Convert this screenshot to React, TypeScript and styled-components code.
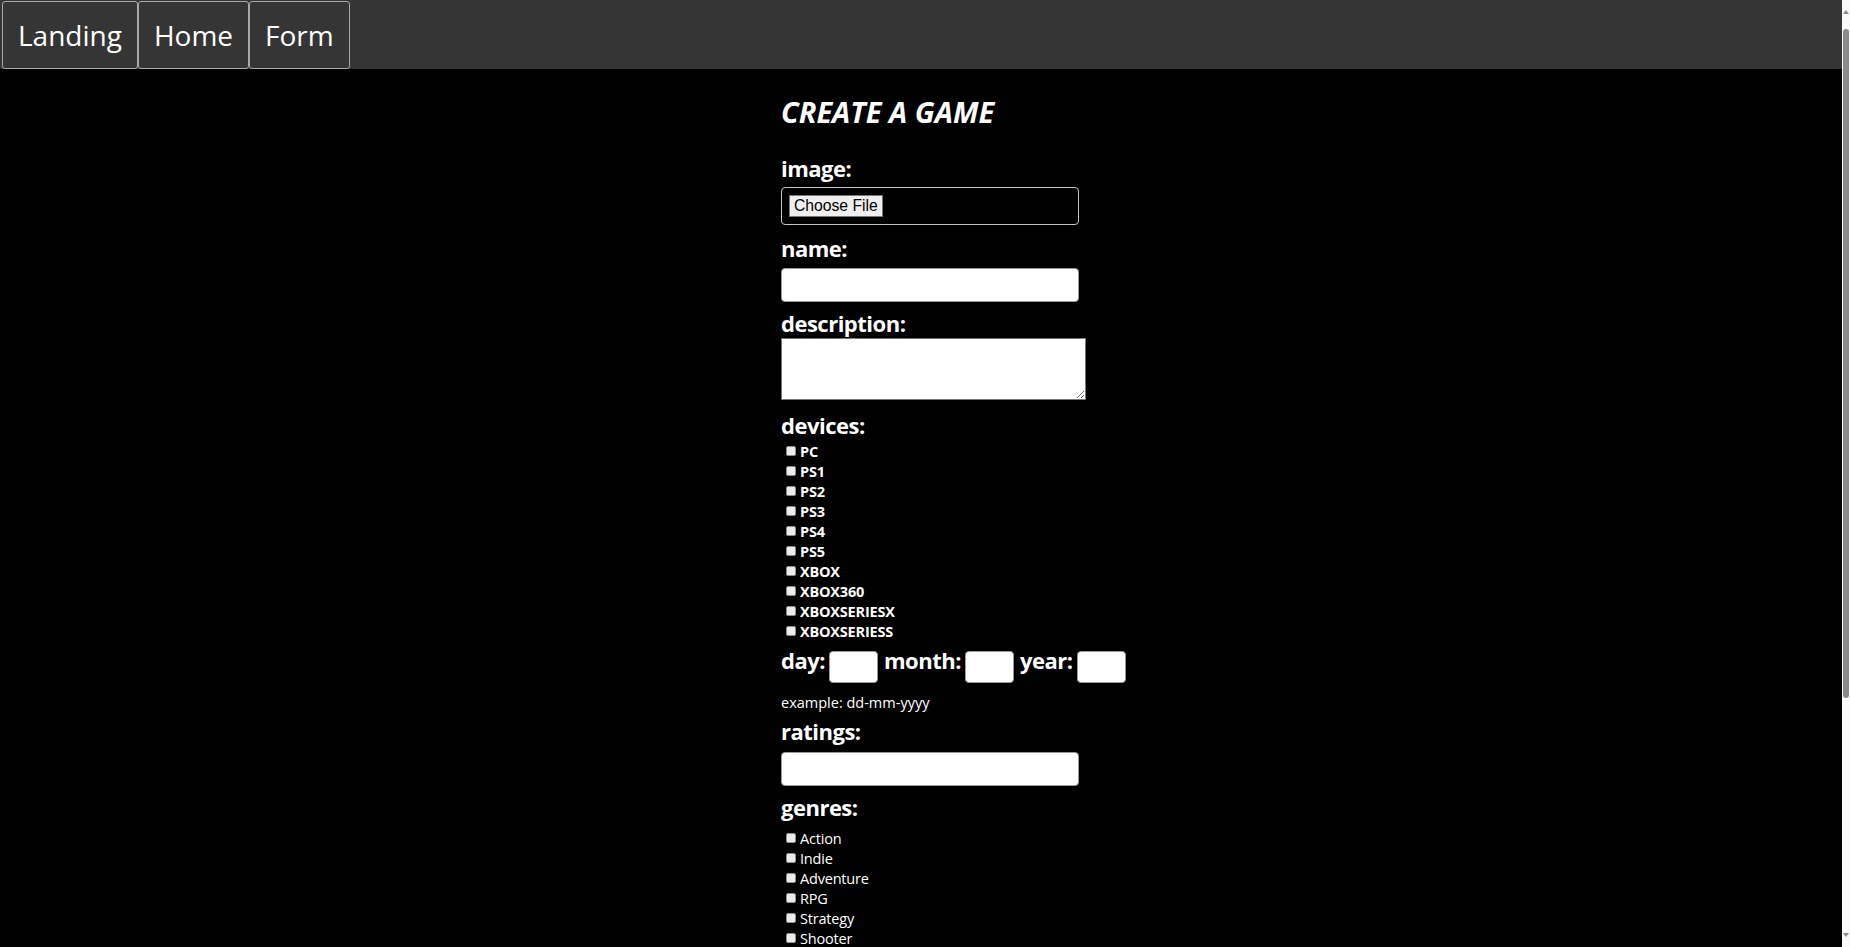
import React from "react";
import styled, { createGlobalStyle } from "styled-components";

const GlobalStyle = createGlobalStyle`
  html, body {
    margin: 0;
    padding: 0;
    background: #000;
  }
  body {
    padding-right: 8px;
    font-family: "Open Sans", "Noto Sans", sans-serif;
    color: #fff;
  }
`;

// window scrollbar as seen in the screenshot (the real one is hidden in headless mode)
const ScrollTrack = styled.div`
  position: fixed;
  top: 0;
  right: 0;
  width: 8px;
  height: 100vh;
  background: #fafafa;
`;

const ScrollThumb = styled.div`
  position: absolute;
  top: 29px;
  left: 1px;
  width: 6px;
  height: 669px;
  background: #8b8b8b;
  border-radius: 3px;
`;

const ScrollArrow = styled.div<{ $down?: boolean }>`
  position: absolute;
  left: 1px;
  ${(p) => (p.$down ? "bottom: 10px;" : "top: 10px;")}
  width: 0;
  height: 0;
  border-left: 3px solid transparent;
  border-right: 3px solid transparent;
  ${(p) =>
    p.$down ? "border-top: 4px solid #8b8b8b;" : "border-bottom: 4px solid #8b8b8b;"}
`;

const NavBar = styled.nav`
  display: flex;
  align-items: flex-start;
  height: 69px;
  padding: 1px 0 0 2px;
  box-sizing: border-box;
  background: #353535;
`;

const NavButton = styled.button`
  height: 68px;
  padding: 0 15px;
  display: flex;
  align-items: center;
  background: #353535;
  color: #fff;
  border: 1px solid #a9a9a9;
  border-radius: 3px;
  font-family: "Open Sans", sans-serif;
  font-size: 28px;
  font-weight: 400;
  cursor: pointer;
`;

const Main = styled.main`
  display: flex;
  justify-content: center;
  padding: 26px 0 30px;
`;

const Form = styled.form`
  width: 280px;
  display: flex;
  flex-direction: column;
  align-items: flex-start;
`;

const Title = styled.h1`
  margin: 0 0 26px;
  font-size: 29px;
  line-height: 34px;
  font-weight: 700;
  font-style: italic;
  white-space: nowrap;
`;

const Label = styled.label<{ $top?: number }>`
  display: block;
  margin-top: ${(p) => p.$top ?? 0}px;
  font-size: 22px;
  line-height: 26px;
  font-weight: 700;
  letter-spacing: -0.5px;
  white-space: nowrap;
`;

const FileInput = styled.input`
  margin-top: 6px;
  width: 298px;
  height: 38px;
  padding: 7px;
  box-sizing: border-box;
  border: 1px solid #c4c4c4;
  border-radius: 4px;
  color: #000;
  font-family: "Liberation Sans", Arial, sans-serif;
  font-size: 15.7px;

  &::file-selector-button {
    height: 22px;
    padding: 0 4px;
    margin-right: 8px;
    background: #efefef;
    color: #000;
    border: 1px solid #767676;
    border-radius: 0;
    font-family: "Liberation Sans", Arial, sans-serif;
    font-size: 15.7px;
  }
`;

const TextInput = styled.input<{ $top?: number }>`
  margin-top: ${(p) => p.$top ?? 7}px;
  width: 298px;
  height: 34px;
  box-sizing: border-box;
  border: 1px solid #9a9a9a;
  border-radius: 4px;
  background: #fff;
`;

const TextArea = styled.textarea`
  margin-top: 2px;
  width: 305px;
  height: 62px;
  box-sizing: border-box;
  border: 1px solid #767676;
  background: #fff;
`;

const CheckList = styled.div<{ $top: number }>`
  margin-top: ${(p) => p.$top}px;
  display: flex;
  flex-direction: column;
`;

const CheckRow = styled.label<{ $bold?: boolean }>`
  display: flex;
  align-items: center;
  height: 20px;
  font-size: 14.5px;
  font-weight: ${(p) => (p.$bold ? 700 : 400)};
  letter-spacing: -0.2px;
  white-space: nowrap;
`;

const Check = styled.input`
  appearance: none;
  width: 10px;
  height: 10px;
  margin: 0 4px 0 5px;
  background: #ececec;
  border: 1px solid #8f8f8f;
  border-radius: 2px;
  box-sizing: border-box;
`;

const DateRow = styled.div`
  margin-top: 6px;
  display: flex;
  align-items: flex-start;
  gap: 4px;
`;

const DateInput = styled.input`
  margin: 4px 2px 0 0;
  width: 49px;
  height: 32px;
  box-sizing: border-box;
  border: 1px solid #9a9a9a;
  border-radius: 4px;
  background: #fff;
`;

const Hint = styled.p`
  margin: 10px 0 0;
  font-size: 14.5px;
  line-height: 20px;
  white-space: nowrap;
`;

const Submit = styled.button`
  margin-top: 20px;
  height: 40px;
  padding: 0 18px;
  background: #353535;
  color: #fff;
  border: 1px solid #a9a9a9;
  border-radius: 3px;
  font-family: "Open Sans", sans-serif;
  font-size: 18px;
  font-weight: 700;
`;

const devices = [
  "PC",
  "PS1",
  "PS2",
  "PS3",
  "PS4",
  "PS5",
  "XBOX",
  "XBOX360",
  "XBOXSERIESX",
  "XBOXSERIESS",
];

const genres = [
  "Action",
  "Indie",
  "Adventure",
  "RPG",
  "Strategy",
  "Shooter",
  "Casual",
  "Simulation",
  "Puzzle",
  "Arcade",
  "Platformer",
  "Racing",
  "Massively Multiplayer",
  "Sports",
  "Fighting",
  "Family",
  "Board Games",
  "Educational",
  "Card",
];

const App: React.FC = () => {
  return (
    <>
      <GlobalStyle />
      <NavBar>
        <NavButton>Landing</NavButton>
        <NavButton>Home</NavButton>
        <NavButton>Form</NavButton>
      </NavBar>
      <Main>
        <Form onSubmit={(e) => e.preventDefault()}>
          <Title>CREATE A GAME</Title>

          <Label>image:</Label>
          <FileInput type="file" />

          <Label $top={10}>name:</Label>
          <TextInput type="text" />

          <Label $top={8}>description:</Label>
          <TextArea />

          <Label $top={12}>devices:</Label>
          <CheckList $top={3}>
            {devices.map((d) => (
              <CheckRow key={d} $bold>
                <Check type="checkbox" />
                {d}
              </CheckRow>
            ))}
          </CheckList>

          <DateRow>
            <Label>day:</Label>
            <DateInput type="text" />
            <Label>month:</Label>
            <DateInput type="text" />
            <Label>year:</Label>
            <DateInput type="text" />
          </DateRow>
          <Hint>example: dd-mm-yyyy</Hint>

          <Label $top={5}>ratings:</Label>
          <TextInput type="text" $top={8} />

          <Label $top={8}>genres:</Label>
          <CheckList $top={8}>
            {genres.map((g) => (
              <CheckRow key={g}>
                <Check type="checkbox" />
                {g}
              </CheckRow>
            ))}
          </CheckList>

          <Submit type="submit">CREATE</Submit>
        </Form>
      </Main>
      <ScrollTrack>
        <ScrollArrow />
        <ScrollThumb />
        <ScrollArrow $down />
      </ScrollTrack>
    </>
  );
};

export default App;
